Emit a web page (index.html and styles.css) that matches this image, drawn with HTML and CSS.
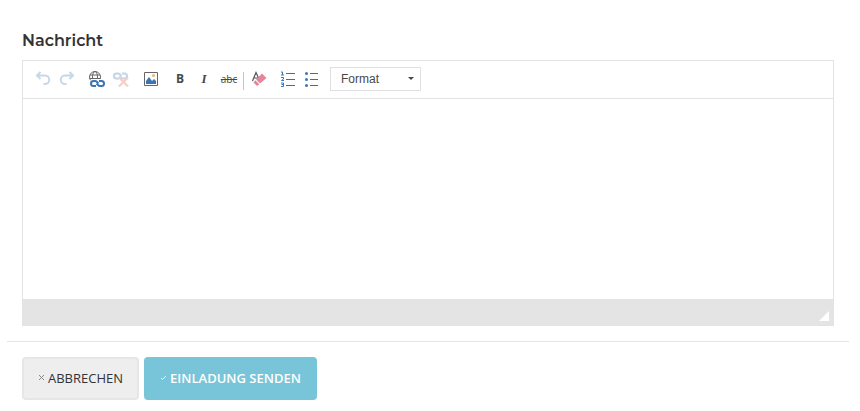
FILE: index.html
```html
<!DOCTYPE html>
<html lang="de">
<head>
<meta charset="utf-8">
<meta name="viewport" content="width=device-width, initial-scale=1">
<title>Nachricht</title>
<link rel="stylesheet" href="styles.css">
</head>
<body>
<form class="invite">
  <div class="field">
    <label class="field-label" for="message">Nachricht</label>
    <div class="editor">
      <div class="toolbar" role="toolbar" aria-label="Editor">
        <div class="group">
          <button class="tool muted" type="button" aria-label="Rückgängig"><svg viewBox="0 0 16 16"><path d="M5.500 1 2 4.500l3.500 3.500M2.500 4.500H10a4 4 0 0 1 0 8.500H8.500" fill="none" stroke="#4a7db8" stroke-width="2"/></svg></button>
          <button class="tool muted" type="button" aria-label="Wiederherstellen"><svg viewBox="0 0 16 16"><path d="m10.500 1 3.500 3.500-3.500 3.500M13.500 4.500H6a4 4 0 0 0 0 8.500h1.500" fill="none" stroke="#4a7db8" stroke-width="2"/></svg></button>
        </div>
        <div class="group">
          <button class="tool" type="button" aria-label="Link einfügen"><svg viewBox="0 0 16 16"><g fill="none" stroke="#666" stroke-width="1"><circle cx="6" cy="6" r="5.500"/><ellipse cx="6" cy="6" rx="2.500" ry="5.500"/><path d="M1 4h10M.5 7.500h11"/></g><rect x="1" y="8" width="15" height="8" rx="3" fill="#fff"/><g fill="none" stroke="#3a76b4" stroke-width="2"><path d="M9.500 12.500 7.500 10.500Q7 10 6 10H4.500a2.500 2.500 0 0 0 0 5H7M7.500 12.500l2 2q.5.500 1.500.5h1.500a2.500 2.500 0 0 0 0-5H10"/></g></svg></button>
          <button class="tool muted" type="button" aria-label="Link entfernen"><svg viewBox="0 0 16 16"><path d="M8.500 5 6.500 3Q6 2.500 5 2.500H3.500a2.500 2.500 0 0 0 0 5H6M6.500 5l2 2q.5.500 1.500.5h1.500a2.500 2.500 0 0 0 0-5H9" fill="none" stroke="#3a76b4" stroke-width="2"/><path d="m6 6.500 9 9m0-9-9 9" stroke="#e5583e" stroke-width="2"/></svg></button>
        </div>
        <div class="group">
          <button class="tool" type="button" aria-label="Bild"><svg viewBox="0 0 16 16"><path d="M1.500 1.500h13v13h-13z" fill="#fff" stroke="#666"/><circle cx="10.500" cy="4.500" r="1.500" fill="#efb65b"/><path d="M3 13v-3l3-4 3 4 2-2 2 2v3z" fill="#3a76b4"/></svg></button>
        </div>
        <div class="group styles">
          <button class="tool bold" type="button" aria-label="Fett">B</button>
          <button class="tool italic" type="button" aria-label="Kursiv">I</button>
          <button class="tool strike" type="button" aria-label="Durchgestrichen">abc</button>
          <span class="separator"></span>
          <button class="tool" type="button" aria-label="Formatierung entfernen"><svg viewBox="0 0 16 16"><path d="M1.500 10 5 1.500 8 8M3 7h4" fill="none" stroke="#555" stroke-width="1.200"/><path d="m11 2.500 4.500 4.500L9 12.500 5 8.500z" fill="#e6849a"/><path d="m4.300 9.300 4 4L6 15l-3.500-3.500z" fill="#e6849a"/></svg></button>
        </div>
        <div class="group lists">
          <button class="tool" type="button" aria-label="Nummerierte Liste"><svg viewBox="0 0 16 16"><path d="M6 2.500h9M6 8.500h9M6 14.500h9" stroke="#666"/><path d="M1 1h1.500v3M1 4h3M1 6.500h2.500v1.500L1.500 9.500H4M1 12h2.500v3.500H1M1.500 13.500h2" fill="none" stroke="#3a76b4"/></svg></button>
          <button class="tool" type="button" aria-label="Liste"><svg viewBox="0 0 16 16"><path d="M6 2.500h8M6 8.500h8M6 14.500h8" stroke="#666"/><g fill="#3a76b4"><circle cx="2.500" cy="2.500" r="1.500"/><circle cx="2.500" cy="8.500" r="1.500"/><circle cx="2.500" cy="14.500" r="1.500"/></g></svg></button>
        </div>
        <div class="format">
          <select class="format-select" aria-label="Format"><option>Format</option></select>
          <span class="caret"></span>
        </div>
      </div>
      <textarea class="content" id="message"></textarea>
      <div class="statusbar"><span class="resizer"></span></div>
    </div>
  </div>
  <div class="actions">
    <button class="btn" type="button"><svg viewBox="0 0 7 7"><path d="m1 1 5 5m0-5L1 6" stroke="#888" fill="none"/></svg>ABBRECHEN</button>
    <button class="btn primary" type="submit"><svg viewBox="0 0 7 7"><path d="m1 4 1.500 1.500L6 2" stroke="#e4f4f8" fill="none"/></svg>EINLADUNG SENDEN</button>
  </div>
</form>
</body>
</html>
```
FILE: styles.css
```css
* {
  box-sizing: border-box;
}

body {
  margin: 0;
  background: #fff;
  color: #333;
  font-family: "Open Sans", sans-serif;
}

.invite {
  margin: 0 11px 0 7px;
}

.field {
  padding: 30px 15px 15px;
}

.field-label {
  display: block;
  height: 30px;
  font: 600 16px/22px Montserrat, Inter, sans-serif;
}

.editor {
  border: 1px solid #e3e3e3;
}

.toolbar {
  display: flex;
  align-items: center;
  gap: 6px;
  height: 38px;
  padding: 0 8px 2px;
  border-bottom: 1px solid #e3e3e3;
}

.group {
  display: flex;
  align-items: center;
}

.styles,
.lists {
  margin-left: -1px;
}

.tool {
  display: flex;
  align-items: center;
  justify-content: center;
  width: 24px;
  height: 24px;
  padding: 0;
  border: 0;
  background: none;
  color: #484848;
}

.tool svg {
  width: 16px;
  height: 16px;
}

.muted svg {
  opacity: 0.3;
}

.bold {
  font: bold 12px/16px "Open Sans", sans-serif;
}

.italic {
  font: italic bold 13px/16px "Liberation Serif", serif;
}

.strike {
  width: 26px;
  font: 10px/16px "Open Sans", sans-serif;
  text-decoration: line-through;
}

.separator {
  width: 1px;
  height: 18px;
  margin: 4px 3px 0 1px;
  background: #c4c4c4;
}

.format {
  position: relative;
}

.format-select {
  appearance: none;
  display: block;
  width: 91px;
  height: 24px;
  padding: 0 10px;
  border: 1px solid #e0e0e0;
  border-radius: 0;
  background: #fff;
  color: #484848;
  font: 12px/22px "Liberation Sans", Arial, sans-serif;
}

.caret {
  position: absolute;
  top: 10px;
  right: 7px;
  border: 3px solid transparent;
  border-top-color: #484848;
  border-bottom: 0;
  pointer-events: none;
}

.content {
  display: block;
  width: 100%;
  height: 200px;
  padding: 16px;
  border: 0;
  outline: 0;
  resize: none;
  font: 13px/20px "Liberation Sans", Arial, sans-serif;
}

.statusbar {
  display: flex;
  align-items: flex-end;
  justify-content: flex-end;
  height: 26px;
  padding: 4px;
  background: #e4e4e4;
}

.resizer {
  border: 5px solid #fff;
  border-top-color: transparent;
  border-left-color: transparent;
}

.actions {
  display: flex;
  gap: 5px;
  padding: 15px;
  border-top: 1px solid #e5e5e5;
}

.btn {
  display: flex;
  align-items: center;
  gap: 3px;
  height: 43px;
  padding: 0 14px 2px;
  border: 2px solid #e6e6e6;
  border-radius: 4px;
  background: #eee;
  color: #333;
  font: 13px/20px "Open Sans", sans-serif;
}

.btn svg {
  width: 7px;
  height: 7px;
}

.primary {
  border-color: #78c5d9;
  background: #78c5d9;
  color: #fff;
  font-weight: 600;
}
```
